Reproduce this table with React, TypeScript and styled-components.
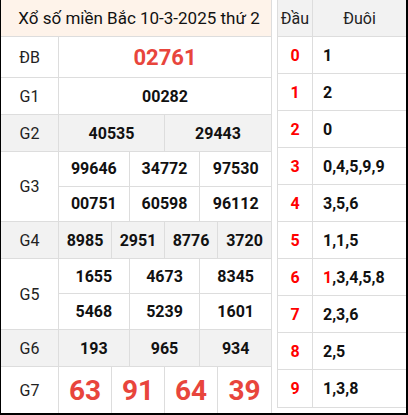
import React from "react";
import styled, { createGlobalStyle } from "styled-components";

const Global = createGlobalStyle`
  html, body { margin: 0; padding: 0; background: #fff; }
  body { font-family: Roboto, "Liberation Sans", sans-serif; color: #111; }
`;

const Frame = styled.div`
  box-sizing: border-box;
  width: 408px;
  height: 415px;
  border-left: 1px solid #000;
  border-right: 2px solid #000;
  border-bottom: 2px solid #000;
  display: flex;
  align-items: flex-start;
`;

const LeftTable = styled.div`
  box-sizing: border-box;
  width: 271px;
  height: 413px;
  border-right: 1px solid #ddd;
  display: flex;
  flex-direction: column;
  margin-right: 5px;
`;

const Title = styled.div`
  box-sizing: border-box;
  height: 37px;
  background: #fef3ea;
  border-bottom: 1px solid #ddd;
  display: flex;
  align-items: center;
  justify-content: center;
  font-size: 17px;
  color: #111;
  padding-left: 6px;
`;

const Row = styled.div<{ $h: number; $gray?: boolean }>`
  box-sizing: border-box;
  height: ${(p) => p.$h}px;
  display: grid;
  grid-template-columns: 58px 1fr;
  background: ${(p) => (p.$gray ? "#f2f2f2" : "#fff")};
  border-bottom: 1px solid #ddd;
  &:last-child { border-bottom: none; flex: 1; }
`;

const Label = styled.div`
  border-right: 1px solid #ddd;
  display: flex;
  align-items: center;
  justify-content: center;
  font-size: 16px;
  color: #222;
`;

const Cells = styled.div<{ $cols: number; $rows?: number }>`
  display: grid;
  grid-template-columns: repeat(${(p) => p.$cols}, 1fr);
  grid-template-rows: repeat(${(p) => p.$rows ?? 1}, 1fr);
`;

const Cell = styled.div<{ $size?: number; $red?: boolean; $lastCol?: boolean; $lastRow?: boolean }>`
  display: flex;
  align-items: center;
  justify-content: center;
  font-weight: 700;
  font-size: ${(p) => p.$size ?? 16}px;
  color: ${(p) => (p.$red ? "#e8453c" : "#111")};
  border-right: ${(p) => (p.$lastCol ? "none" : "1px solid #ddd")};
  border-bottom: ${(p) => (p.$lastRow ? "none" : "1px solid #ddd")};
`;

const RightTable = styled.div`
  box-sizing: border-box;
  flex: 1;
  height: 408px;
  border-left: 1px solid #ddd;
  border-bottom: 1px solid #ddd;
  display: grid;
  grid-template-columns: 35px 1fr;
  grid-template-rows: repeat(11, 37px);
`;

const Head = styled.div<{ $first?: boolean }>`
  background: #f2f2f2;
  border-bottom: 1px solid #ddd;
  border-right: ${(p) => (p.$first ? "1px solid #ddd" : "none")};
  display: flex;
  align-items: center;
  justify-content: center;
  font-size: 16px;
  color: #222;
`;

const Dau = styled.div<{ $last?: boolean }>`
  border-right: 1px solid #ddd;
  border-bottom: ${(p) => (p.$last ? "none" : "1px solid #ddd")};
  display: flex;
  align-items: center;
  justify-content: center;
  font-weight: 700;
  font-size: 16px;
  color: #f00;
`;

const Duoi = styled.div<{ $last?: boolean }>`
  border-bottom: ${(p) => (p.$last ? "none" : "1px solid #ddd")};
  display: flex;
  align-items: center;
  padding-left: 10px;
  font-weight: 700;
  font-size: 16px;
  color: #111;
`;

const Red = styled.span`
  color: #f00;
`;

type Prize = { label: string; nums: string[]; cols: number; h: number; gray?: boolean; size?: number; red?: boolean };

const prizes: Prize[] = [
  { label: "ĐB", nums: ["02761"], cols: 1, h: 41, size: 22, red: true },
  { label: "G1", nums: ["00282"], cols: 1, h: 37 },
  { label: "G2", nums: ["40535", "29443"], cols: 2, h: 37, gray: true },
  { label: "G3", nums: ["99646", "34772", "97530", "00751", "60598", "96112"], cols: 3, h: 70 },
  { label: "G4", nums: ["8985", "2951", "8776", "3720"], cols: 4, h: 37, gray: true },
  { label: "G5", nums: ["1655", "4673", "8345", "5468", "5239", "1601"], cols: 3, h: 71 },
  { label: "G6", nums: ["193", "965", "934"], cols: 3, h: 37, gray: true },
  { label: "G7", nums: ["63", "91", "64", "39"], cols: 4, h: 47, size: 28, red: true },
];

const loto: [string, React.ReactNode][] = [
  ["0", "1"],
  ["1", "2"],
  ["2", "0"],
  ["3", "0,4,5,9,9"],
  ["4", "3,5,6"],
  ["5", "1,1,5"],
  ["6", <><Red>1</Red>,3,4,5,8</>],
  ["7", "2,3,6"],
  ["8", "2,5"],
  ["9", "1,3,8"],
];

export default function App() {
  return (
    <>
      <Global />
      <Frame>
        <LeftTable>
          <Title>Xổ số miền Bắc 10-3-2025 thứ 2</Title>
          {prizes.map((p) => {
            const rows = Math.ceil(p.nums.length / p.cols);
            return (
              <Row key={p.label} $h={p.h} $gray={p.gray}>
                <Label>{p.label}</Label>
                <Cells $cols={p.cols} $rows={rows}>
                  {p.nums.map((n, i) => (
                    <Cell
                      key={i}
                      $size={p.size}
                      $red={p.red}
                      $lastCol={i % p.cols === p.cols - 1}
                      $lastRow={Math.floor(i / p.cols) === rows - 1}
                    >
                      {n}
                    </Cell>
                  ))}
                </Cells>
              </Row>
            );
          })}
        </LeftTable>
        <RightTable>
          <Head $first>Đầu</Head>
          <Head>Đuôi</Head>
          {loto.map(([d, t], i) => (
            <React.Fragment key={d}>
              <Dau $last={i === loto.length - 1}>{d}</Dau>
              <Duoi $last={i === loto.length - 1}>{t}</Duoi>
            </React.Fragment>
          ))}
        </RightTable>
      </Frame>
    </>
  );
}
